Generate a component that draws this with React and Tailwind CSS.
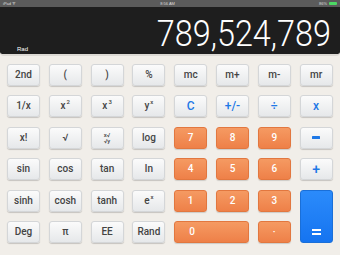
import React from "react";

const gray = "bg-gradient-to-b from-[#fbfbfb] to-[#e6e8ea] border border-[#d4d6d8] shadow-[0_1px_1px_rgba(0,0,0,0.18)] text-[#444]";
const orange = "bg-gradient-to-b from-[#f59a62] to-[#ee8048] border border-[#e2773f] shadow-[0_1px_1px_rgba(0,0,0,0.15)] text-white";
const blueText = "!text-[#1e78e6] font-bold";

function Btn({ children, cls = gray, extra = "" }) {
  return (
    <div className={`rounded-[3px] flex items-center justify-center text-[10px] leading-none font-medium ${cls} ${extra}`} style={{ fontFamily: 'Roboto, "Liberation Sans", sans-serif' }}>
      {children}
    </div>
  );
}

function Sup({ base, sup }) {
  return (
    <span className="flex items-start leading-none">
      <span>{base}</span>
      <span className="text-[6px] -mt-[2px] ml-[1px]">{sup}</span>
    </span>
  );
}

function Bar() {
  return <span className="block w-[8px] h-[3px] bg-[#1e78e6] rounded-[0.5px]" />;
}

export default function App() {
  return (
    <div className="w-[340px] h-[255px] bg-[#f1eee9] overflow-hidden" style={{ fontFamily: '"Liberation Sans", Arial, sans-serif' }}>
      <div className="h-[7px] bg-[#5b5b5b] flex items-center justify-between px-[3px] text-[4px] text-[#ddd] leading-none">
        <span>iPad ᯤ</span>
        <span>8:56 AM</span>
        <span className="flex items-center gap-[2px]">86% <span className="inline-block w-[8px] h-[3px] bg-[#4cd964] rounded-[1px]" /></span>
      </div>
      <div className="h-[49px] bg-[#1e1e1e] rounded-b-[4px] border-b-[2px] border-[#dcd9d4] relative">
        <span className="absolute right-[9px] top-[8px] text-white text-[37px] leading-none font-light whitespace-nowrap origin-right scale-x-[0.875]" style={{ fontFamily: 'Roboto, "Liberation Sans", sans-serif' }}>789,524,789</span>
        <span className="absolute left-[17px] bottom-[2px] text-[6px] text-white leading-none">Rad</span>
      </div>
      <div className="grid grid-cols-[repeat(8,33px)] grid-rows-[repeat(6,22px)] gap-x-[8.8px] gap-y-[9.4px] pl-[7px] pt-[8px]">
        <Btn>2nd</Btn>
        <Btn>(</Btn>
        <Btn>)</Btn>
        <Btn>%</Btn>
        <Btn>mc</Btn>
        <Btn>m+</Btn>
        <Btn>m-</Btn>
        <Btn>mr</Btn>

        <Btn>1/x</Btn>
        <Btn><Sup base="x" sup="2" /></Btn>
        <Btn><Sup base="x" sup="3" /></Btn>
        <Btn><Sup base="y" sup="x" /></Btn>
        <Btn extra={blueText + " text-[12px]"}>C</Btn>
        <Btn extra={blueText + " text-[12px]"}>+/-</Btn>
        <Btn extra={blueText + " text-[12px]"}>÷</Btn>
        <Btn extra={blueText + " text-[12px]"}>x</Btn>

        <Btn>x!</Btn>
        <Btn>√</Btn>
        <Btn><span className="flex flex-col items-center leading-none text-[6px]"><span>x√</span><span>√y</span></span></Btn>
        <Btn>log</Btn>
        <Btn cls={orange}>7</Btn>
        <Btn cls={orange}>8</Btn>
        <Btn cls={orange}>9</Btn>
        <Btn><Bar /></Btn>

        <Btn>sin</Btn>
        <Btn>cos</Btn>
        <Btn>tan</Btn>
        <Btn>ln</Btn>
        <Btn cls={orange}>4</Btn>
        <Btn cls={orange}>5</Btn>
        <Btn cls={orange}>6</Btn>
        <Btn extra={blueText + " text-[14px]"}>+</Btn>

        <Btn>sinh</Btn>
        <Btn>cosh</Btn>
        <Btn>tanh</Btn>
        <Btn><Sup base="e" sup="x" /></Btn>
        <Btn cls={orange}>1</Btn>
        <Btn cls={orange}>2</Btn>
        <Btn cls={orange}>3</Btn>
        <div className="row-span-2 rounded-[3px] bg-gradient-to-b from-[#2b8bfb] to-[#1574f0] border border-[#1a6fd8] flex flex-col items-center justify-end gap-[2px] pb-[7px]">
          <span className="block w-[9px] h-[2px] bg-white" />
          <span className="block w-[9px] h-[2px] bg-white" />
        </div>

        <Btn>Deg</Btn>
        <Btn>π</Btn>
        <Btn>EE</Btn>
        <Btn>Rand</Btn>
        <Btn cls={orange} extra="col-span-2 !justify-start pl-[14px]">0</Btn>
        <Btn cls={orange}>·</Btn>
      </div>
    </div>
  );
}
